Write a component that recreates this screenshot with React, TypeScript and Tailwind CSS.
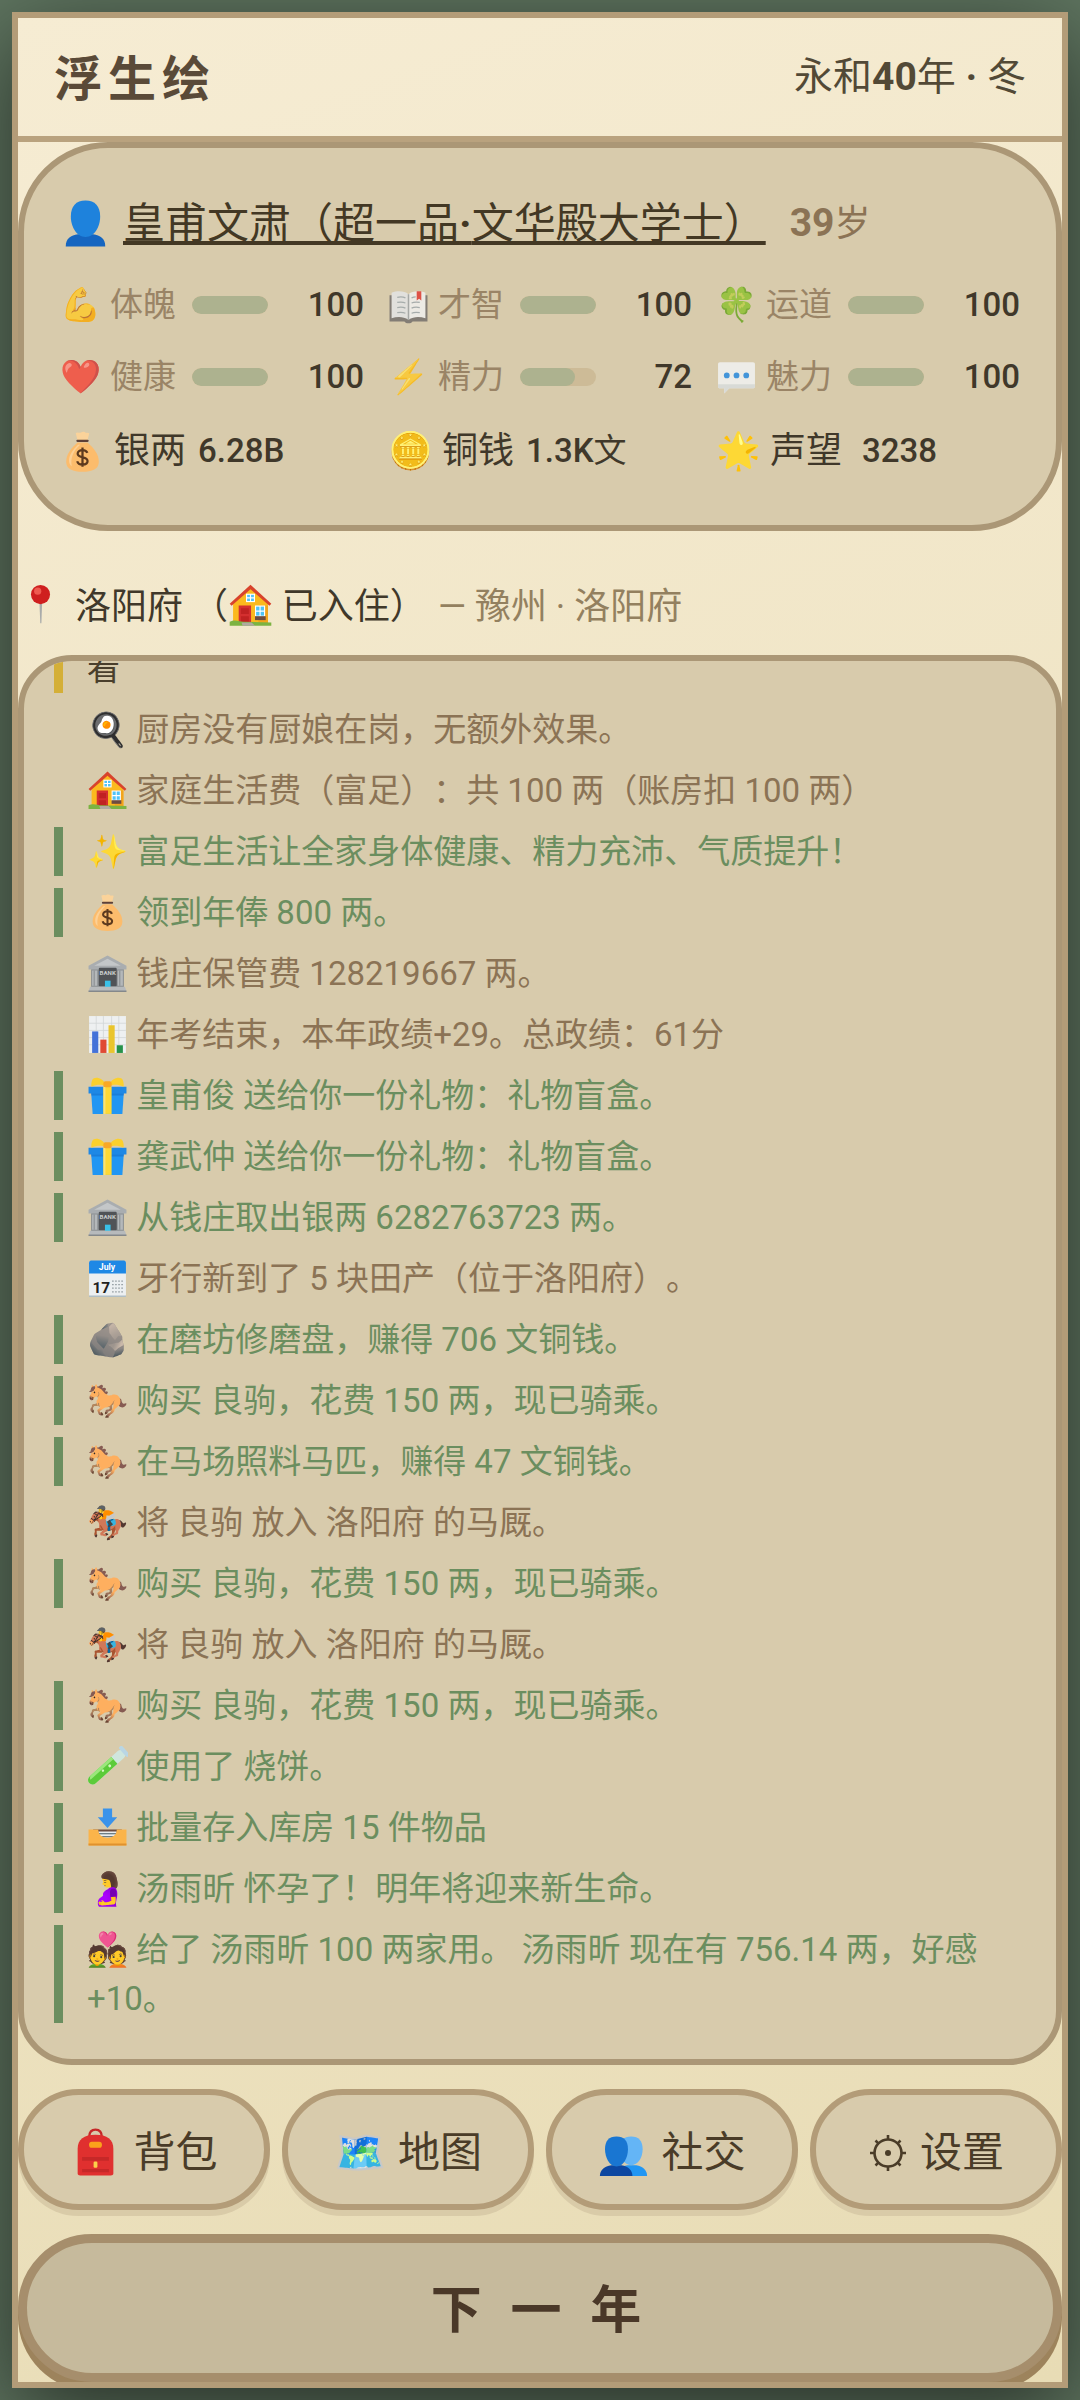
import type { ReactNode } from 'react'
import clsx from 'clsx'

const icons: Record<string, ReactNode> = {
  bag: (
    <>
      <path d="M15.500 10 14 3.600c2-1.400 3 .2 4.600-.6 2-1 3.400-.4 4.600.600 1.200-.4 2-.2 2.800.2L24.500 10z" fill="#fbd39a" />
      <path d="M15.500 12C10 17 5.500 22.500 5.500 29c0 6.500 6 9 14.500 9s14.500-2.500 14.500-9c0-6.500-4.500-12-10-17z" fill="#fcbc6c" />
      <path d="M16 14c-4.500 4.500-8 9-8 14 0 2 .8 4 2.500 5.200C9 26 12 19 18 14z" fill="#fdd095" />
      <path d="M15.500 10.500h9" stroke="#5d4037" strokeWidth="2" strokeLinecap="round" />
      <path d="M20 16.500v17M24.300 21.300c-.6-1.700-2.200-2.500-4.300-2.500-2.500 0-4.300 1.200-4.300 3.200 0 4.300 8.800 2 8.800 6.400 0 2-1.900 3.200-4.500 3.200-2.400 0-4.200-1-4.700-3" fill="none" stroke="#5d3a1e" strokeWidth="2" />
    </>
  ),
  house: (
    <>
      <path d="M4.500 17 20 3l15.500 14v19h-31z" fill="#fbb91e" />
      <path d="M27 20h8.500v16H27z" fill="#f3a41b" />
      <path d="M1.500 18.500 20 1.500l18.500 17-1.700 1.800L20 5.500 3.200 20.300z" fill="#d8432c" />
      <rect x="9.500" y="20" width="11" height="16" fill="#d42f2f" />
      <path d="M11.500 22.500h7v5h-7zM11.500 29.500h7v5h-7z" fill="#c02222" />
      <rect x="16.500" y="10" width="7" height="6.500" fill="#4fc3f7" stroke="#fff" />
      <path d="M20 10v6.500M16.500 13.200h7" stroke="#fff" />
      <rect x="24.500" y="20.500" width="8" height="9" fill="#4fc3f7" stroke="#fff" />
      <path d="M28.500 20.500v9M24.500 25h8" stroke="#fff" />
      <path d="M24 29.500h9.500V33H24z" fill="#6d4c41" />
      <path d="M1.500 34.500c5-2.500 9 0 12 0l25 .5v3h-37z" fill="#7cb342" />
      <path d="M12 35h9l3 3H13z" fill="#b0a9a0" />
    </>
  ),
  bank: (
    <>
      <rect x="4" y="15" width="32" height="19" fill="#8b8f92" />
      <path d="M1.500 12.500 20 2.500l18.500 10V16h-37z" fill="#a9adb0" />
      <path d="M7 12.500 20 5.500l13 7z" fill="#c4c7c9" />
      <path d="M5 17h5v15H5zM30 17h5v15h-5z" fill="#b4b8ba" />
      <path d="M7 17v15M32 17v15" stroke="#888c8f" />
      <rect x="11.500" y="14.500" width="17.500" height="18" rx="1" fill="#505357" />
      <text x="20.200" y="21.500" textAnchor="middle" fontSize="6" fontWeight="700" fill="#c9cccd">BANK</text>
      <rect x="17.500" y="27" width="5.500" height="7" fill="#39c0e8" />
      <path d="M3 33h34l1.500 4.500h-37z" fill="#b7babc" />
      <path d="M1.500 36.500h37V38h-37z" fill="#84888b" />
    </>
  ),
  chart: (
    <>
      <rect x="2" y="2" width="36" height="36" fill="#eef0f1" />
      <path d="M2 9h36M2 16h36M2 23h36M2 30h36M9 2v36M16 2v36M24 2v36M31 2v36" stroke="#d3d6d8" strokeWidth=".8" />
      <path d="M5 17h6v21H5z" fill="#4472d8" />
      <path d="M13 25h6v13h-6z" fill="#e04a34" />
      <path d="M21 11h6v27h-6z" fill="#eac52d" />
      <path d="M29 30.500h6V38h-6z" fill="#26924a" />
    </>
  ),
  gift: (
    <>
      <path d="M4 16h32l-1.500 22h-29z" fill="#2196f3" />
      <path d="M1.500 11.500h37V18h-37z" fill="#1e88e5" />
      <path d="M4 18h32l-.3 2H4.300z" fill="#1565c0" opacity=".5" />
      <path d="M16 11.500h8V38h-8z" fill="#fdd835" />
      <path d="M16 11.500h2V38h-2z" fill="#f9e27a" />
      <path d="M19 10C15 2 7 1 5 5c-1 3-1 5-.5 6.500C10 9 14 9 19 11zM21 10C25 2 33 1 35 5c1 3 1 5 .5 6.500C30 9 26 9 21 11z" fill="#fbd02d" />
      <rect x="16" y="6" width="8" height="6" rx="2" fill="#f9a825" />
    </>
  ),
  calendar: (
    <>
      <rect x="2" y="3" width="36" height="35" rx="2" fill="#eceff1" />
      <path d="M2 15V5c0-1.500.8-2.500 2-2.500h32c1.200 0 2 1 2 2.500v10z" fill="#1e88e5" />
      <text x="19.500" y="11.500" textAnchor="middle" fontSize="8.500" fontWeight="700" fill="#fff">July</text>
      <text x="14" y="34" textAnchor="middle" fontSize="15" fontWeight="700" fill="#212121">17</text>
      <path d="M24.500 22.500h12M24.500 26h12M24.500 29.500h12M24.500 33h12" stroke="#90999e" strokeDasharray="1.500 1.500" strokeWidth="1.200" />
      <path d="M2 36.500h36V38H2z" fill="#b0bec5" />
    </>
  ),
  tube: (
    <g transform="rotate(48 20 20)">
      <rect x="15.500" y="-2" width="9" height="46" rx="4.500" fill="#cfe6dd" />
      <path d="M15.500 11h9v28.500a4.500 4.500 0 0 1-9 0z" fill="#5ccb3a" />
      <path d="M15.500 11h3v30c-2-.5-3-2-3-4z" fill="#9be67c" />
      <rect x="13.500" y="-4" width="13" height="4" rx="2" fill="#b9d6e4" />
      <circle cx="21" cy="18" r="1.400" fill="#d7f7c4" />
      <circle cx="20" cy="26" r="1.200" fill="#d7f7c4" />
    </g>
  ),
  inbox: (
    <>
      <path d="M15.500 1.500h9v8.500h5L20 20.500 10.500 10h5z" fill="#3a93ea" />
      <path d="M6 22h28v8H6z" fill="#6d4c41" />
      <path d="M11 24h18v8H11z" fill="#e9ecee" />
      <path d="M11 26h18M11 29h18" stroke="#455a64" />
      <path d="M1.500 22h9.500c0 5.500 4 8 9 8s9-2.500 9-8h9.500v15.500h-37z" fill="#fbb44a" />
      <path d="M1.500 35.500h37v2h-37z" fill="#e0922e" />
    </>
  ),
  backpack: (
    <>
      <path d="M15 8C15 3.500 17 2 20 2s5 1.500 5 6" fill="none" stroke="#c62828" strokeWidth="1.800" />
      <path d="M6 36.500V17C6 9.500 11 6 20 6s14 3.500 14 11v19.500c0 1-.8 1.500-2 1.500H8c-1.200 0-2-.5-2-1.500z" fill="#e0302f" />
      <path d="M9.500 23.500h21v3h-21zM9.500 33h21v2.500h-21z" fill="#c62828" />
      <rect x="15" y="11.500" width="10" height="4.800" rx="2" fill="#fba21b" />
      <rect x="18.500" y="27" width="3" height="5" rx="1" fill="#fbd04a" />
    </>
  ),
  chat: (
    <>
      <path d="M4 5h32c1.500 0 2 .8 2 2v21.500c0 1.200-.6 2-2 2H13L8 35.500v-5H4c-1.500 0-2-.8-2-2V7c0-1.200.5-2 2-2z" fill="#f3f5f6" />
      <path d="M2 26.500h36v2c0 1.200-.6 2-2 2H13L8 35.500v-5H4c-1.500 0-2-.8-2-2z" fill="#d9dee1" />
      <circle cx="10.500" cy="18" r="2.800" fill="#1e88e5" />
      <circle cx="20" cy="18" r="2.800" fill="#1e88e5" />
      <circle cx="29.500" cy="18" r="2.800" fill="#1e88e5" />
    </>
  ),
  book: (
    <>
      <path d="M1.500 10h37v25.500H24c-1.500 2.500-6.500 2.500-8 0H1.500z" fill="#6f6a68" />
      <path d="M3.500 7.500C9 5.500 16 5.500 20 9v25c-5-3.500-11-3.500-16.500-1.500z" fill="#e4e6e8" />
      <path d="M36.500 7.500C31 5.500 24 5.500 20 9v25c5-3.500 11-3.500 16.500-1.500z" fill="#f1f2f3" />
      <path d="M20 9v25" stroke="#9aa0a4" strokeWidth="1.500" />
      <path d="M9 12c3-.6 6-.4 8 .6M9 17c3-.6 6-.4 8 .6M9 22c3-.6 6-.4 8 .6M9 27c3-.6 6-.4 8 .6M23 12.600c2-1 3-1 4-1M23 17.600c2-1 5-1.200 8-.6M23 22.600c2-1 5-1.200 8-.6M23 27.600c2-1 5-1.200 8-.6" fill="none" stroke="#9aa5ab" strokeWidth="1.200" />
      <path d="M28 6h4.500v9l-2.200-1.500L28 15z" fill="#e0342e" />
    </>
  ),
  pin: (
    <>
      <path d="M19 14h2.500l-.7 20h-1z" fill="#a9abaa" />
      <circle cx="20" cy="8.500" r="8.500" fill="#cf1f1f" />
      <circle cx="17.500" cy="5.500" r="3.200" fill="#ee5a50" />
    </>
  ),
  person: (
    <>
      <path d="M4.500 38c0-6.500 4-8.500 9.500-9.500h12c5.500 1 9.500 3 9.500 9.500z" fill="#1565c0" />
      <path d="M20 2c7.500 0 11.500 4.500 11.500 12.500S27 30.500 20 30.500 8.500 22.500 8.500 14.500 12.500 2 20 2z" fill="#1e82dc" />
    </>
  ),
  people: (
    <>
      <path d="M15 38.500c0-5 3-7.500 8-8.500h7c5 1 8.500 3.500 8.500 8.500z" fill="#2196f3" />
      <path d="M26 7.500c6 0 9 3.500 9 10S31.500 30 26 30s-9-6-9-12.500 3-10 9-10z" fill="#64b5f6" />
      <path d="M1.500 38.500c0-5 3.500-7.500 9-8.500h8c5 1 8.500 3.500 8.500 8.500z" fill="#0d47a1" />
      <path d="M14.500 7.500c6 0 9 3.500 9 10S20 31 14.500 31s-9-7-9-13.500 3-10 9-10z" fill="#1976d2" />
    </>
  ),
  gear: (
    <g fill="none" stroke="#4a3c28" strokeWidth="2.600">
      <circle cx="20" cy="20" r="13.500" />
      <circle cx="20" cy="20" r="3" fill="#4a3c28" stroke="none" />
      <path d="M20 7V2M20 33v5M7 20H2M33 20h5M10.800 10.800 7.500 7.500M29.200 10.800l3.300-3.300M10.800 29.200l-3.300 3.300M29.200 29.200l3.300 3.300" />
    </g>
  ),
}

const Icon = ({ name, className }: { name: string; className?: string }) => (
  <svg viewBox="0 0 40 40" aria-hidden="true" className={clsx('inline-block shrink-0', className)}>
    {icons[name]}
  </svg>
)

const stats = [
  { icon: '💪', label: '体魄', value: 100 },
  { svg: 'book', label: '才智', value: 100 },
  { icon: '🍀', label: '运道', value: 100 },
  { icon: '❤️', label: '健康', value: 100 },
  { icon: '⚡', label: '精力', value: 72 },
  { svg: 'chat', label: '魅力', value: 100 },
]

type LogEntry = { icon?: string; svg?: string; text: string; type: 'normal' | 'good' | 'event' }

const logs: LogEntry[] = [
  { text: '看', type: 'event' },
  { icon: '🍳', text: '厨房没有厨娘在岗，无额外效果。', type: 'normal' },
  { svg: 'house', text: '家庭生活费（富足）：共 100 两（账房扣 100 两）', type: 'normal' },
  { icon: '✨', text: '富足生活让全家身体健康、精力充沛、气质提升！', type: 'good' },
  { svg: 'bag', text: '领到年俸 800 两。', type: 'good' },
  { svg: 'bank', text: '钱庄保管费 128219667 两。', type: 'normal' },
  { svg: 'chart', text: '年考结束，本年政绩+29。总政绩：61分', type: 'normal' },
  { svg: 'gift', text: '皇甫俊 送给你一份礼物：礼物盲盒。', type: 'good' },
  { svg: 'gift', text: '龚武仲 送给你一份礼物：礼物盲盒。', type: 'good' },
  { svg: 'bank', text: '从钱庄取出银两 6282763723 两。', type: 'good' },
  { svg: 'calendar', text: '牙行新到了 5 块田产（位于洛阳府）。', type: 'normal' },
  { icon: '🪨', text: '在磨坊修磨盘，赚得 706 文铜钱。', type: 'good' },
  { icon: '🐎', text: '购买 良驹，花费 150 两，现已骑乘。', type: 'good' },
  { icon: '🐎', text: '在马场照料马匹，赚得 47 文铜钱。', type: 'good' },
  { icon: '🏇', text: '将 良驹 放入 洛阳府 的马厩。', type: 'normal' },
  { icon: '🐎', text: '购买 良驹，花费 150 两，现已骑乘。', type: 'good' },
  { icon: '🏇', text: '将 良驹 放入 洛阳府 的马厩。', type: 'normal' },
  { icon: '🐎', text: '购买 良驹，花费 150 两，现已骑乘。', type: 'good' },
  { svg: 'tube', text: '使用了 烧饼。', type: 'good' },
  { svg: 'inbox', text: '批量存入库房 15 件物品', type: 'good' },
  { icon: '🤰', text: '汤雨昕 怀孕了！明年将迎来新生命。', type: 'good' },
  { icon: '💑', text: '给了 汤雨昕 100 两家用。 汤雨昕 现在有 756.14 两，好感+10。', type: 'good' },
]

const logStyles = {
  normal: 'border-transparent text-[#8b7355]',
  good: 'border-[#6b8e5f] text-[#6b8e5f]',
  event: 'border-[#d4af37] text-[#4a3f2c]',
}

const actions = [
  { svg: 'backpack', label: '背包' },
  { icon: '🗺️', label: '地图' },
  { svg: 'people', label: '社交' },
  { svg: 'gear', label: '设置' },
]

export default function App() {
  return (
    <div className="h-screen bg-[#5f7560] p-3 font-['Roboto','Noto_Sans_CJK_SC',sans-serif] [text-spacing-trim:space-all]" lang="zh-CN">
      <div className="flex h-full flex-col overflow-hidden border-6 border-[#b39c78] bg-linear-160 from-[#f6ecd3] to-[#e8dcb5] shadow-[0_24px_90px_rgba(0,0,0,0.6)]">
        {/* Header */}
        <header className="flex h-31 shrink-0 items-center justify-between border-b-6 border-[#b9a27e] px-9">
          <h1 className="pt-1.5 text-[48px] font-bold tracking-[6px] text-[#5a4a38]">浮生绘</h1>
          <p className="text-[39px] text-[#524936]">
            永和<b>40</b>年 <b>·</b> 冬
          </p>
        </header>

        {/* Character card */}
        <section className="shrink-0 rounded-[90px] border-6 border-[#ab9776] bg-[#d8cbac] px-9 pt-11 pb-9 text-[33px] text-[#40382a]">
          <div className="flex h-[63px] items-center">
            <Icon name="person" className="mr-3 size-[51px]" />
            <a href="#profile" className="text-[42px] font-normal text-[#433824] underline decoration-4 underline-offset-3 [text-decoration-skip-ink:none]">
              皇甫文肃（超一品<b>·</b>文华殿大学士）
            </a>
            <span className="ml-6 text-[39px] text-[#8b7355]">
              <b>39</b>
              <span className="text-[36px]">岁</span>
            </span>
          </div>

          <div className="mt-3.5 grid grid-cols-3 gap-x-6">
            {stats.map((stat) => (
              <div key={stat.label} className="flex h-18 items-center">
                <span className="flex items-center gap-[9px] text-[#8b7355] opacity-80">
                  {stat.svg ? <Icon name={stat.svg} className="size-[41px]" /> : <span>{stat.icon}</span>}
                  {stat.label}
                </span>
                <div className="ml-4 h-[18px] w-[76px] overflow-hidden rounded-full bg-[#cdbb97]">
                  <div className="h-full rounded-full bg-[#adb28f]" style={{ width: `${stat.value}%` }} />
                </div>
                <span className="ml-auto font-medium">{stat.value}</span>
              </div>
            ))}
          </div>

          <div className="grid h-19 grid-cols-3 items-center gap-x-6 font-medium">
            <div className="flex items-center gap-3">
              <span className="flex items-center gap-[9px] text-[36px] font-normal">
                <Icon name="bag" className="size-[45px]" />
                银两
              </span>
              6.28B
            </div>
            <div className="flex items-center gap-3">
              <span className="flex items-center gap-[9px] text-[36px] font-normal">
                <span>🪙</span>铜钱
              </span>
              <span>
                1.3K<span className="font-normal">文</span>
              </span>
            </div>
            <div className="flex items-center gap-5">
              <span className="flex items-center gap-[9px] text-[36px] font-normal">
                <span>🌟</span>声望
              </span>
              3238
            </div>
          </div>
        </section>

        {/* Location */}
        <div className="flex h-31 shrink-0 items-center pt-7 text-[36px] text-[#40382a]">
          <Icon name="pin" className="mr-3 size-[45px]" />
          <span>
            洛阳府 （<Icon name="house" className="size-[45px] align-[-9px]" /> 已入住）
          </span>
          <span className="ml-3 text-[#93805f]">— 豫州 · 洛阳府</span>
        </div>

        {/* Event log, pinned to the latest entry */}
        <section className="flex min-h-0 flex-1 flex-col justify-end overflow-hidden rounded-[54px] border-6 border-[#ab9776] bg-[#d8cbac] px-[30px] pb-9">
          <ul className="flex flex-col gap-3">
            {logs.map((log, idx) => (
              <li key={idx} className={clsx('border-l-9 pl-6 text-[33px] leading-[49px]', logStyles[log.type])}>
                {log.svg && <Icon name={log.svg} className="size-[41px] align-[-9px]" />}
                {log.icon}
                {(log.svg || log.icon) && ' '}
                {log.text}
              </li>
            ))}
          </ul>
        </section>

        {/* Actions */}
        <nav className="my-6 grid shrink-0 grid-cols-4 gap-3">
          {actions.map((action) => (
            <button
              key={action.label}
              type="button"
              className="flex h-[121px] items-center justify-center gap-3 rounded-full border-6 border-[#b39c78] bg-[#d8cbac] pt-1.5 text-[42px] text-[#4a3c28] shadow-[0_6px_0_#d9cba8]"
            >
              {action.svg ? (
                <Icon name={action.svg} className={action.svg === 'gear' ? 'size-[40px]' : 'size-[51px]'} />
              ) : (
                <span>{action.icon}</span>
              )}
              {action.label}
            </button>
          ))}
        </nav>

        <button
          type="button"
          className="h-37 shrink-0 rounded-full border-9 border-[#a68e6c] bg-[#c6ba9c] pt-1.5 text-[51px] font-bold tracking-[8px] text-[#4a3828] shadow-[0_9px_0_#9d835c]"
        >
          下 一 年
        </button>
      </div>
    </div>
  )
}
